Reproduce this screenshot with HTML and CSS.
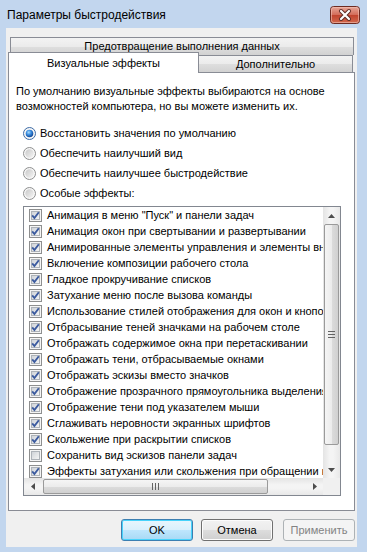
FILE: index.html
```html
<!DOCTYPE html>
<html lang="ru">
<head>
	<meta charset="UTF-8">
	<title>Параметры быстродействия</title>
	<link rel="stylesheet" href="styles.css">
</head>
<body>
	<svg class="defs" width="0" height="0">
		<defs>
			<linearGradient id="cbIn" x1="0" y1="0" x2="1" y2="1">
				<stop offset="0" stop-color="#cdd1d6"/>
				<stop offset="1" stop-color="#f7f7f7"/>
			</linearGradient>
			<linearGradient id="rdOut" x1="0" y1="0" x2="1" y2="1">
				<stop offset="0" stop-color="#c9c9c9"/>
				<stop offset="1" stop-color="#f4f4f4"/>
			</linearGradient>
			<radialGradient id="rdDot" cx="0.4" cy="0.35" r="0.7">
				<stop offset="0" stop-color="#a9dcfb"/>
				<stop offset="0.45" stop-color="#3a8de0"/>
				<stop offset="1" stop-color="#0b3d8c"/>
			</radialGradient>
			<linearGradient id="xbtn" x1="0" y1="0" x2="0" y2="1">
				<stop offset="0" stop-color="#e8a89a"/>
				<stop offset="0.5" stop-color="#d26b58"/>
				<stop offset="0.51" stop-color="#c0432e"/>
				<stop offset="1" stop-color="#d36a4e"/>
			</linearGradient>
			<symbol id="cb" viewBox="0 0 13 13">
				<rect x="0.5" y="0.5" width="12" height="12" fill="#f5f5f5" stroke="#8e8f8f"/>
				<rect x="2.5" y="2.5" width="8" height="8" fill="url(#cbIn)" stroke="#aeb3b9"/>
			</symbol>
			<symbol id="cbOn" viewBox="0 0 13 13">
				<use href="#cb"/>
				<path d="M3.2 6.4 L5.4 9 L9.8 3.2" fill="none" stroke="#3c5b9f" stroke-width="1.9"/>
			</symbol>
			<symbol id="rd" viewBox="0 0 13 13">
				<circle cx="6.5" cy="6.5" r="6" fill="#f7f7f7" stroke="#8e8f8f"/>
				<circle cx="6.5" cy="6.5" r="4.2" fill="url(#rdOut)"/>
			</symbol>
			<symbol id="rdOn" viewBox="0 0 13 13">
				<circle cx="6.5" cy="6.5" r="6" fill="#f7f7f7" stroke="#3c6aa5"/>
				<circle cx="6.5" cy="6.5" r="3.8" fill="url(#rdDot)"/>
			</symbol>
		</defs>
	</svg>

	<div class="window">
		<div class="titlebar">
			<span class="title">Параметры быстродействия</span>
			<svg class="close" width="30" height="18" viewBox="0 0 30 18">
				<rect x="0.5" y="0.5" width="29" height="17" rx="3" fill="url(#xbtn)" stroke="#6c2b22"/>
				<rect x="1.5" y="1.5" width="27" height="15" rx="2" fill="none" stroke="#f1c3b8" stroke-opacity="0.6"/>
				<path d="M11 5 L19 13 M19 5 L11 13" stroke="#5a2a24" stroke-width="4" stroke-linecap="round"/>
				<path d="M11 5 L19 13 M19 5 L11 13" stroke="#fff" stroke-width="2.2" stroke-linecap="round"/>
			</svg>
		</div>

		<div class="client">
			<div class="tabs">
				<div class="tab-row back">
					<div class="tab wide">Предотвращение выполнения данных</div>
				</div>
				<div class="tab-row front">
					<div class="tab active">Визуальные эффекты</div>
					<div class="tab other">Дополнительно</div>
				</div>
			</div>

			<div class="panel">
				<p class="intro">По умолчанию визуальные эффекты выбираются на основе<br>возможностей компьютера, но вы можете изменить их.</p>

				<div class="radios">
					<div class="radio"><svg width="13" height="13"><use href="#rdOn"/></svg><span>Восстановить значения по умолчанию</span></div>
					<div class="radio"><svg width="13" height="13"><use href="#rd"/></svg><span>Обеспечить наилучший вид</span></div>
					<div class="radio"><svg width="13" height="13"><use href="#rd"/></svg><span>Обеспечить наилучшее быстродействие</span></div>
					<div class="radio"><svg width="13" height="13"><use href="#rd"/></svg><span>Особые эффекты:</span></div>
				</div>

				<div class="listbox">
					<div class="items">
						<div class="item"><svg width="13" height="13"><use href="#cbOn"/></svg><span>Анимация в меню "Пуск" и панели задач</span></div>
						<div class="item"><svg width="13" height="13"><use href="#cbOn"/></svg><span>Анимация окон при свертывании и развертывании</span></div>
						<div class="item"><svg width="13" height="13"><use href="#cbOn"/></svg><span>Анимированные элементы управления и элементы внутри окна</span></div>
						<div class="item"><svg width="13" height="13"><use href="#cbOn"/></svg><span>Включение композиции рабочего стола</span></div>
						<div class="item"><svg width="13" height="13"><use href="#cbOn"/></svg><span>Гладкое прокручивание списков</span></div>
						<div class="item"><svg width="13" height="13"><use href="#cbOn"/></svg><span>Затухание меню после вызова команды</span></div>
						<div class="item"><svg width="13" height="13"><use href="#cbOn"/></svg><span>Использование стилей отображения для окон и кнопок</span></div>
						<div class="item"><svg width="13" height="13"><use href="#cbOn"/></svg><span>Отбрасывание теней значками на рабочем столе</span></div>
						<div class="item"><svg width="13" height="13"><use href="#cbOn"/></svg><span>Отображать содержимое окна при перетаскивании</span></div>
						<div class="item"><svg width="13" height="13"><use href="#cbOn"/></svg><span>Отображать тени, отбрасываемые окнами</span></div>
						<div class="item"><svg width="13" height="13"><use href="#cbOn"/></svg><span>Отображать эскизы вместо значков</span></div>
						<div class="item"><svg width="13" height="13"><use href="#cbOn"/></svg><span>Отображение прозрачного прямоугольника выделения</span></div>
						<div class="item"><svg width="13" height="13"><use href="#cbOn"/></svg><span>Отображение тени под указателем мыши</span></div>
						<div class="item"><svg width="13" height="13"><use href="#cbOn"/></svg><span>Сглаживать неровности экранных шрифтов</span></div>
						<div class="item"><svg width="13" height="13"><use href="#cbOn"/></svg><span>Скольжение при раскрытии списков</span></div>
						<div class="item"><svg width="13" height="13"><use href="#cb"/></svg><span>Сохранить вид эскизов панели задач</span></div>
						<div class="item"><svg width="13" height="13"><use href="#cbOn"/></svg><span>Эффекты затухания или скольжения при обращении к меню</span></div>
					</div>

					<div class="vscroll">
						<div class="sb-btn"><svg width="7" height="4"><path d="M0 4 L3.5 0 L7 4Z" fill="#4d4d4d"/></svg></div>
						<div class="v-track">
							<div class="v-thumb"><svg width="7" height="7"><path d="M0 .5H7M0 3.5H7M0 6.5H7" stroke="#636363"/></svg></div>
						</div>
						<div class="sb-btn"><svg width="7" height="4"><path d="M0 0 L3.5 4 L7 0Z" fill="#4d4d4d"/></svg></div>
					</div>

					<div class="hscroll">
						<div class="sb-btn"><svg width="4" height="7"><path d="M4 0 L0 3.5 L4 7Z" fill="#4d4d4d"/></svg></div>
						<div class="h-track">
							<div class="h-thumb"><svg width="7" height="7"><path d="M.5 0V7M3.5 0V7M6.5 0V7" stroke="#636363"/></svg></div>
						</div>
						<div class="sb-btn"><svg width="4" height="7"><path d="M0 0 L4 3.5 L0 7Z" fill="#4d4d4d"/></svg></div>
					</div>

					<div class="corner"></div>
				</div>
			</div>

			<div class="buttons">
				<button class="btn default">OK</button>
				<button class="btn">Отмена</button>
				<button class="btn disabled">Применить</button>
			</div>
		</div>
	</div>
</body>
</html>
```

FILE: styles.css
```css
*{
	margin: 0;
	padding: 0;
	box-sizing: border-box;
}
body{
	width: 367px;
	height: 552px;
	overflow: hidden;
	background: #c2d6ee;
	font-family: "Liberation Sans", Arial, sans-serif;
	font-size: 11px;
	color: #000;
}
.defs{
	position: absolute;
}
.window{
	height: 552px;
	display: flex;
	flex-direction: column;
}

/* заголовок */
.titlebar{
	height: 28px;
	display: flex;
	align-items: center;
	justify-content: space-between;
	padding: 2px 7px 0 7px;
}
.title{
	font-size: 12px;
}
.close{
	display: block;
	margin-top: -1px;
}

/* клиентская область */
.client{
	flex: 1;
	margin: 0 10px 5px 6px;
	padding: 9px 2px 0 2px;
	background: #f0f0f0;
	display: flex;
	flex-direction: column;
}

/* вкладки */
.tab-row{
	display: flex;
}
.tab{
	border: 1px solid #898c95;
	border-bottom: none;
	background: linear-gradient(#f3f3f3, #ebebeb 50%, #dedede 51%, #d2d2d2);
	display: flex;
	align-items: center;
	justify-content: center;
}
.back .wide{
	margin-left: 2px;
	width: 344px;
	height: 18px;
	padding-bottom: 2px;
}
.front{
	margin-top: -3px;
	height: 21px;
	margin-bottom: -1px;
	align-items: flex-start;
	position: relative;
	z-index: 1;
}
.tab.active{
	width: 191px;
	height: 21px;
	background: #fff;
	position: relative;
	z-index: 2;
	padding-bottom: 1px;
}
.tab.other{
	margin-top: 3px;
	margin-left: -1px;
	width: 155px;
	height: 17px;
}

/* панель */
.panel{
	height: 439px;
	border: 1px solid #898c95;
	background: #fff;
	padding: 11px 0 0 7px;
}
.intro{
	line-height: 15px;
	white-space: nowrap;
}
.radios{
	margin-top: 9px;
	margin-left: 7px;
}
.radio{
	height: 20px;
	display: flex;
	align-items: center;
	gap: 4px;
}
.radio svg{
	display: block;
}

/* список */
.listbox{
	margin: 3px 0 0 7px;
	width: 318px;
	height: 290px;
	border: 1px solid #828790;
	display: grid;
	grid-template-columns: 1fr 17px;
	grid-template-rows: 1fr 17px;
	background: #fff;
}
.items{
	overflow: hidden;
	white-space: nowrap;
}
.item{
	height: 16px;
	display: flex;
	align-items: center;
	padding-left: 5px;
	gap: 5px;
}
.item svg{
	display: block;
	flex: none;
}

/* полосы прокрутки */
.vscroll,
.hscroll{
	display: flex;
	background: linear-gradient(90deg, #e4e4e4, #f4f4f4 40%, #f4f4f4 60%, #e8e8e8);
}
.vscroll{
	flex-direction: column;
}
.hscroll{
	background: linear-gradient(#e4e4e4, #f4f4f4 40%, #f4f4f4 60%, #e8e8e8);
}
.sb-btn{
	width: 17px;
	height: 17px;
	flex: none;
	display: flex;
	align-items: center;
	justify-content: center;
}
.sb-btn svg{
	display: block;
}
.v-track{
	flex: 1;
	padding-bottom: 16px;
}
.v-thumb{
	height: 221px;
	margin: 0 1px;
	border: 1px solid #9a9a9a;
	border-radius: 2px;
	background: linear-gradient(90deg, #f5f5f5, #ececec 50%, #dcdcdc 51%, #d0d0d0);
	display: flex;
	align-items: center;
	justify-content: center;
}
.h-track{
	flex: 1;
	padding-left: 2px;
}
.h-thumb{
	width: 225px;
	height: 15px;
	margin-top: 1px;
	border: 1px solid #9a9a9a;
	border-radius: 2px;
	background: linear-gradient(#f5f5f5, #ececec 50%, #dcdcdc 51%, #d0d0d0);
	display: flex;
	align-items: center;
	justify-content: center;
}
.v-thumb svg,
.h-thumb svg{
	display: block;
}
.corner{
	background: #f0f0f0;
}

/* кнопки */
.buttons{
	margin-top: 8px;
	display: flex;
	justify-content: flex-end;
}
.btn{
	width: 72px;
	height: 22px;
	margin-left: 8px;
	border: 1px solid #707070;
	border-radius: 3px;
	background: linear-gradient(#f2f2f2, #ebebeb 50%, #dddddd 51%, #cfcfcf);
	font-family: "Liberation Sans", Arial, sans-serif;
	font-size: 11px;
	color: #000;
	box-shadow: inset 0 0 0 1px #fcfcfc;
}
.btn.default{
	border-color: #3c7fb1;
	background: linear-gradient(#e8f6fd, #d9f0fc 50%, #bee6fd 51%, #a7d9f5);
	box-shadow: inset 0 0 0 1px #48d3fb;
}
.btn.disabled{
	margin-left: 10px;
	border-color: #adb2b5;
	background: #f4f4f4;
	color: #838383;
	box-shadow: none;
}
```
